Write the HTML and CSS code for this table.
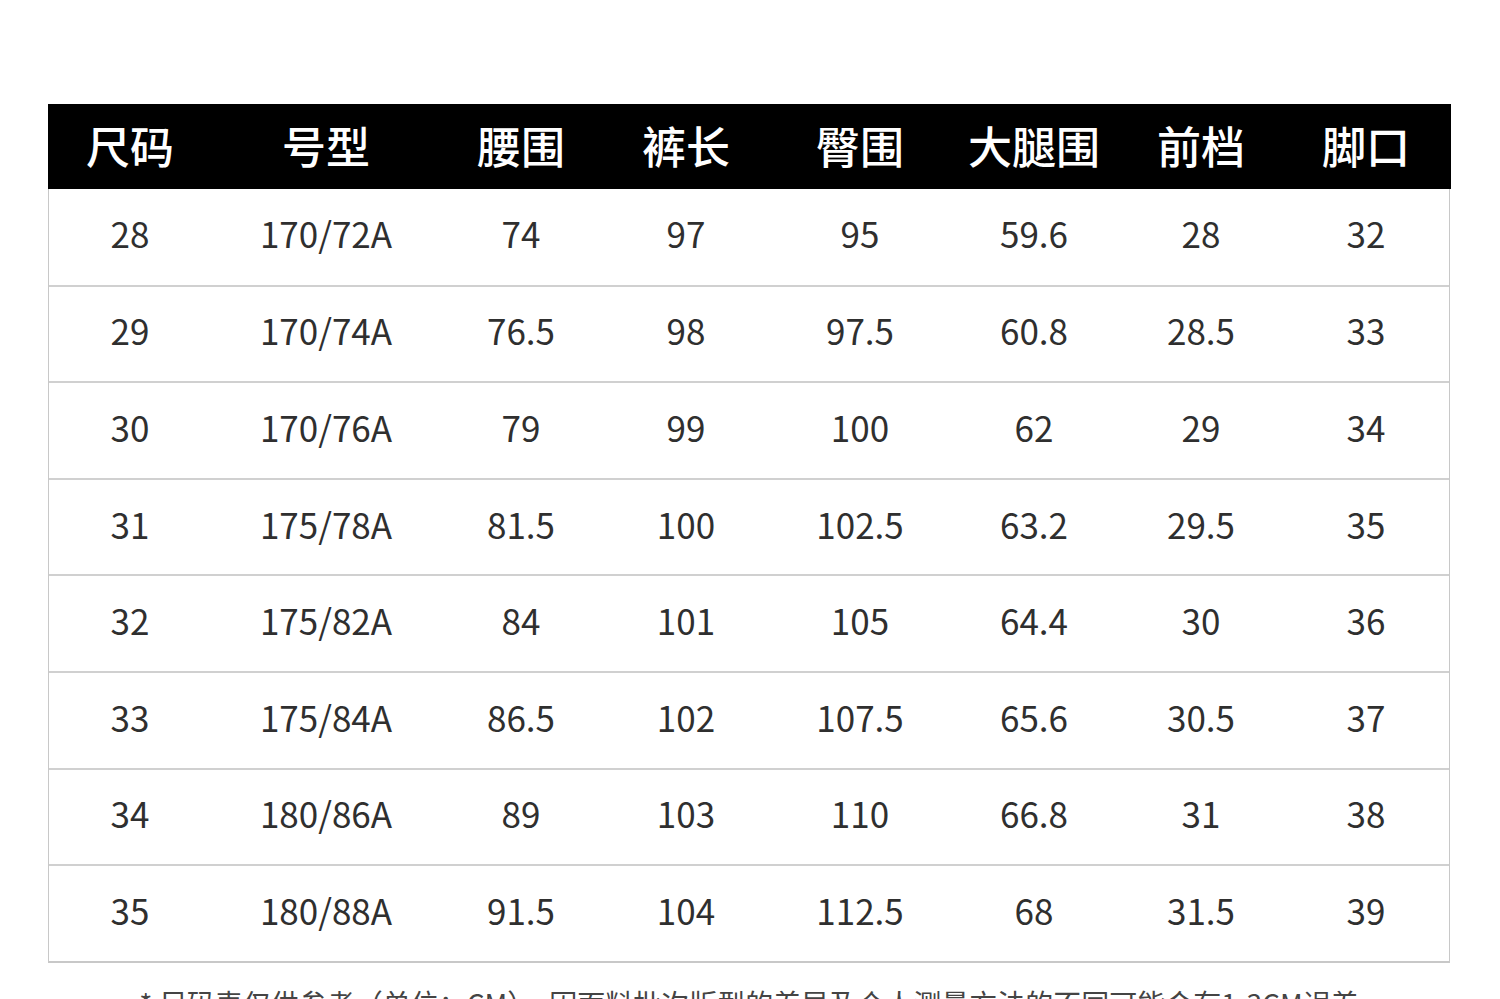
FILE: index.html
```html
<!DOCTYPE html>
<html lang="zh-CN">
<head>
<meta charset="utf-8">
<title>尺码表</title>
<link rel="stylesheet" href="styles.css">
</head>
<body>
<main class="page">
  <div class="size-table">
    <div class="row head">
      <div>尺码</div><div>号型</div><div>腰围</div><div>裤长</div><div>臀围</div><div>大腿围</div><div>前档</div><div>脚口</div>
    </div>
    <div class="row"><div>28</div><div>170/72A</div><div>74</div><div>97</div><div>95</div><div>59.6</div><div>28</div><div>32</div></div>
    <div class="row"><div>29</div><div>170/74A</div><div>76.5</div><div>98</div><div>97.5</div><div>60.8</div><div>28.5</div><div>33</div></div>
    <div class="row"><div>30</div><div>170/76A</div><div>79</div><div>99</div><div>100</div><div>62</div><div>29</div><div>34</div></div>
    <div class="row"><div>31</div><div>175/78A</div><div>81.5</div><div>100</div><div>102.5</div><div>63.2</div><div>29.5</div><div>35</div></div>
    <div class="row"><div>32</div><div>175/82A</div><div>84</div><div>101</div><div>105</div><div>64.4</div><div>30</div><div>36</div></div>
    <div class="row"><div>33</div><div>175/84A</div><div>86.5</div><div>102</div><div>107.5</div><div>65.6</div><div>30.5</div><div>37</div></div>
    <div class="row"><div>34</div><div>180/86A</div><div>89</div><div>103</div><div>110</div><div>66.8</div><div>31</div><div>38</div></div>
    <div class="row"><div>35</div><div>180/88A</div><div>91.5</div><div>104</div><div>112.5</div><div>68</div><div>31.5</div><div>39</div></div>
  </div>
  <p class="note">* 尺码表仅供参考（单位：CM），因面料批次版型的差异及个人测量方法的不同可能会有1-3CM误差</p>
</main>
</body>
</html>
```

FILE: styles.css
```css
html, body {
  margin: 0;
  padding: 0;
  background: #fff;
}
body {
  font-family: "Noto Sans CJK SC", "Noto Sans", sans-serif;
  color: #333;
}
.page {
  padding: 104px 50px 0 48px;
}
.size-table {
  width: 1402px;
  border-left: 1.5px solid #c8c8c8;
  border-right: 1.5px solid #c8c8c8;
  border-bottom: 2px solid #c8c8c8;
  box-sizing: border-box;
}
.row {
  display: grid;
  grid-template-columns: 162px 230px 160px 170px 178px 170px 164px 1fr;
  height: 96.6px;
  align-items: center;
  text-align: center;
  font-size: 35px;
  color: #2f2f2f;
  border-top: 2px solid #d0d0d0;
  box-sizing: border-box;
  padding-bottom: 8px;
}
.row.head {
  height: 85px;
  background: #000;
  color: #fff;
  font-size: 44px;
  font-weight: 500;
  border-top: none;
  margin: 0 -1.5px;
  padding: 0 1.5px 4px;
}
.row.head + .row {
  border-top: none;
  height: 95.6px;
}
.note {
  margin: 20px 0 0;
  text-align: center;
  font-size: 28px;
  line-height: 40px;
  color: #444;
}
```
